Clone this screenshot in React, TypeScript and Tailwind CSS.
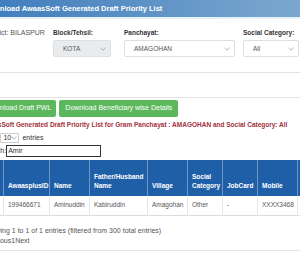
import React from "react";

const font = { fontFamily: '"Liberation Sans", Arial, sans-serif' };

function Chevron() {
  return (
    <svg width="6" height="4" viewBox="0 0 6 4" className="shrink-0">
      <path d="M0.5 0.8 L3 3.2 L5.5 0.8" fill="none" stroke="#9aa0a6" strokeWidth="0.8" />
    </svg>
  );
}

export default function App() {
  const cols = [
    { h: "", w: "w-[23px]" },
    { h: "AwaasplusID", w: "w-[46px]" },
    { h: "Name", w: "w-[40px]" },
    { h: "Father/Husband Name", w: "w-[58px]" },
    { h: "Village", w: "w-[40px]" },
    { h: "Social Category", w: "w-[35px]" },
    { h: "JobCard", w: "w-[35px]" },
    { h: "Mobile", w: "w-[40px]" },
    { h: "Status", w: "w-[40px]" },
  ];
  const row = ["", "199466671", "Aminuddin", "Kabiruddin", "Amagohan", "Other", "-", "XXXX3468", ""];
  return (
    <div className="w-[300px] h-[258px] overflow-hidden bg-white" style={font}>
      <div className="ml-[-20px] w-[360px] text-[7px] text-[#555]">
        {/* header */}
        <div className="h-[17px] bg-gradient-to-r from-[#3d7cbc] to-[#83add0] flex items-center pl-[4px] text-white font-bold text-[7.5px]">
          Download AwaasSoft Generated Draft Priority List
        </div>
        <div className="h-[2px] bg-[#e6f2f8]" />
        {/* filters */}
        <div className="flex pt-[9px] h-[54px] border-b border-[#e3e3e3] text-[6.5px]">
          <div className="w-[73px] pl-[5px] leading-[9px] text-[7px]">
            District: BILASPUR
          </div>
          <div className="w-[71px]">
            <div className="font-bold text-[#333] leading-[9px]">Block/Tehsil:</div>
            <div className="mt-[3px] w-[58px] h-[17px] bg-[#e9ecef] border border-[#dcdfe3] rounded-[2px] flex items-center justify-between pl-[9px] pr-[4px]">
              <span>KOTA</span>
              <Chevron />
            </div>
          </div>
          <div className="w-[119px]">
            <div className="font-bold text-[#333] leading-[9px]">Panchayat:</div>
            <div className="mt-[3px] w-[111px] h-[17px] bg-white border border-[#dcdfe3] rounded-[2px] flex items-center justify-between pl-[9px] pr-[4px]">
              <span>AMAGOHAN</span>
              <Chevron />
            </div>
          </div>
          <div className="w-[60px]">
            <div className="font-bold text-[#333] leading-[9px]">Social Category:</div>
            <div className="mt-[3px] w-[56px] h-[17px] bg-white border border-[#dcdfe3] rounded-[2px] flex items-center justify-between pl-[9px] pr-[4px]">
              <span>All</span>
              <Chevron />
            </div>
          </div>
        </div>
        <div className="h-[25px] border-b border-[#e3e3e3]" />
        {/* buttons */}
        <div className="flex gap-[3px] pl-[1px] mt-[2px]">
          <div className="h-[17px] px-[5px] bg-[#5cb85c] text-white rounded-[2px] flex items-center">Download Draft PWL</div>
          <div className="h-[17px] px-[6px] bg-[#5cb85c] text-white rounded-[2px] flex items-center">Download Beneficiary wise Details</div>
        </div>
        <div className="mt-[3px] pl-[1px] font-bold text-[#a3303c] text-[6.5px] leading-[9px]">
          AwaasSoft Generated Draft Priority List for Gram Panchayat : AMAGOHAN and Social Category: All
        </div>
        {/* length */}
        <div className="mt-[4px] pl-[1px] flex items-center h-[10px] text-[#333]">
          <span>Show&nbsp;</span>
          <div className="w-[19px] h-[10px] border border-[#ccc] rounded-[1px] flex items-center justify-between px-[2px] text-[#333]">
            <span>10</span>
            <Chevron />
          </div>
          <span className="ml-[3px]">entries</span>
        </div>
        <div className="mt-[2px] pl-[2px] flex items-center h-[12px] text-[#333]">
          <span>Search:</span>
          <div className="w-[95px] h-[12px] border border-[#333] flex items-center px-[1px] text-[#333]">Amir</div>
        </div>
        {/* table */}
        <table className="mt-[3px] table-fixed border-collapse w-[357px] text-[6.5px]">
          <colgroup>
            {cols.map((c, i) => (
              <col key={i} className={c.w} />
            ))}
          </colgroup>
          <thead>
            <tr className="bg-[#1f5fa8] h-[36px]">
              {cols.map((c, i) => (
                <th
                  key={i}
                  className="border-l border-r border-[#6f95c6] text-left align-bottom pl-[4px] pb-[6px] text-white font-bold leading-[9px]"
                >
                  {c.h}
                </th>
              ))}
            </tr>
          </thead>
          <tbody>
            <tr className="h-[19px] border-b border-[#dcdcdc]">
              {row.map((v, i) => (
                <td key={i} className="border-l border-r border-[#e6e6e6] pl-[4px] text-[#555]">
                  {v}
                </td>
              ))}
            </tr>
          </tbody>
        </table>
        <div className="mt-[10px] pl-[3px] text-[#555] leading-[9px]">
          Showing 1 to 1 of 1 entries (filtered from 300 total entries)
        </div>
        <div className="mt-[1px] pl-[4px] text-[#555] leading-[9px]">Previous1Next</div>
        <div className="mt-[5px] h-[1px] bg-[#e6e6e6]" />
      </div>
    </div>
  );
}
